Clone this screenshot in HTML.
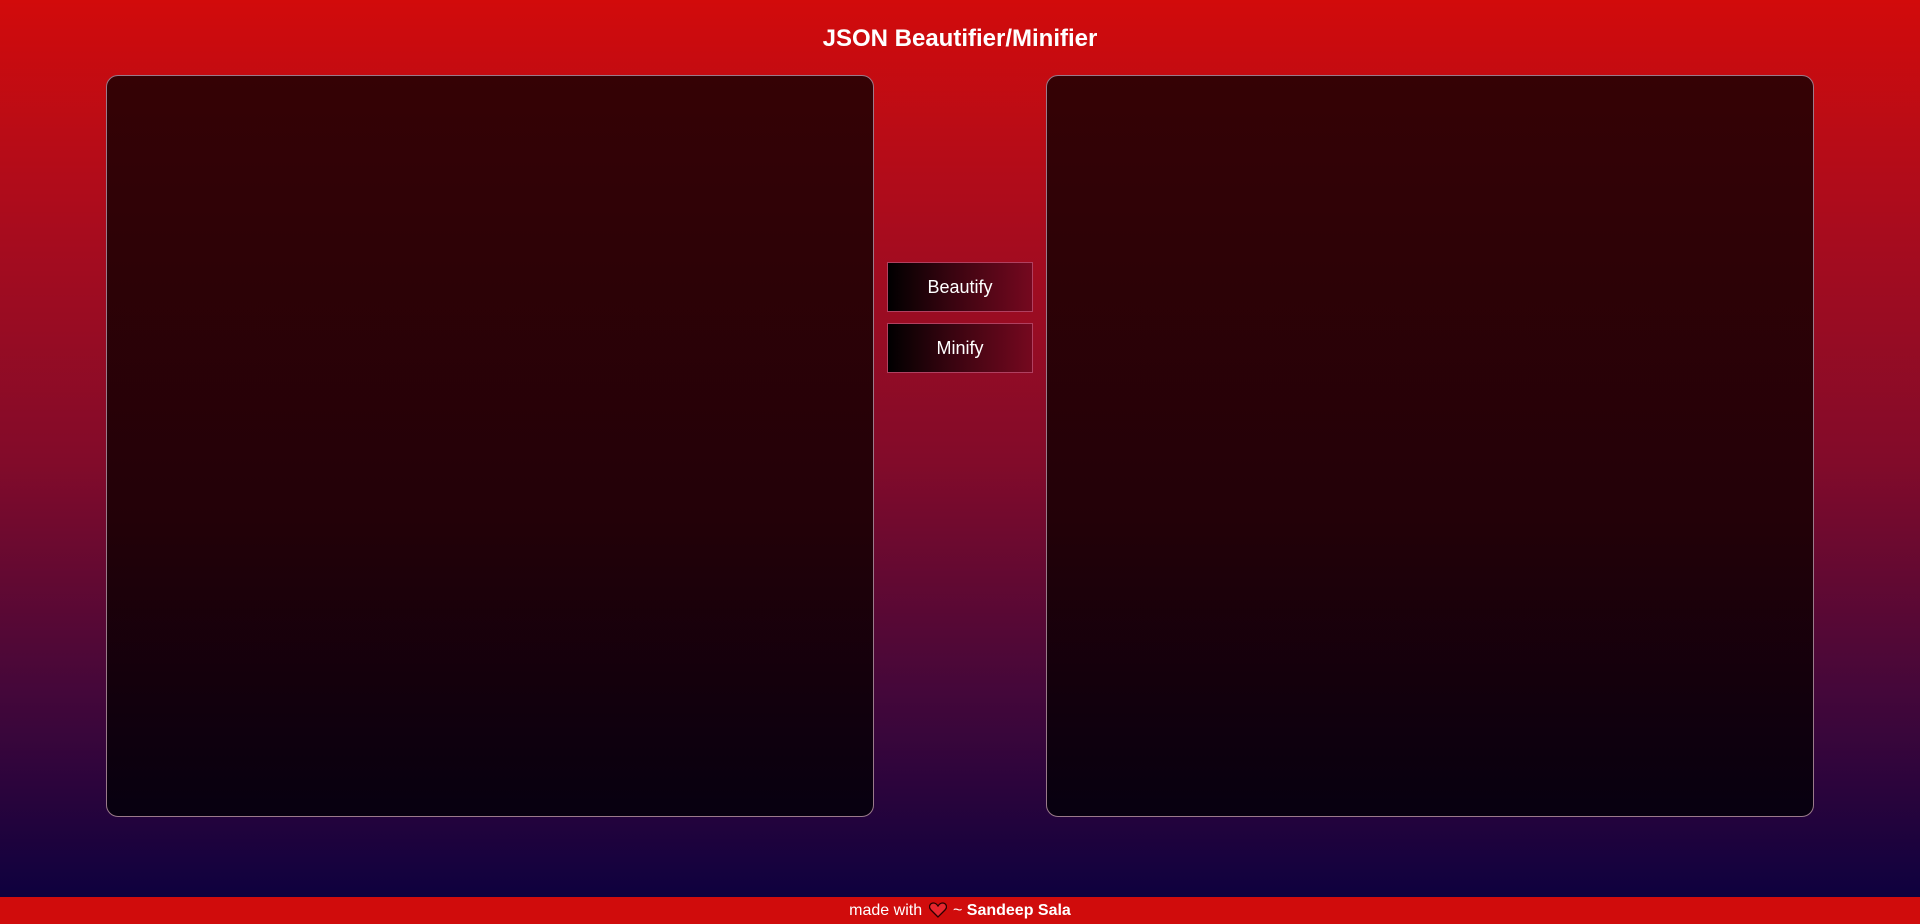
<!DOCTYPE html>
<html><head><style>
html,body{margin:0;padding:0}
body{width:1920px;height:924px;position:relative;overflow:hidden;font-family:"Liberation Sans",sans-serif;
background:linear-gradient(to bottom,#d20b0b 0%,#a80c1e 25%,#820b2a 50%,#44073a 75%,#07003f 100%);}
h1{position:absolute;top:25px;left:0;width:1920px;margin:0;text-align:center;color:#fff;font-size:24px;font-weight:bold;}
.panel{position:absolute;top:75px;width:768px;height:742px;border:1px solid #9a7a8a;border-radius:12px;box-sizing:border-box;
background:linear-gradient(to bottom,#350205 0%,#230108 60%,#070010 100%);}
.btn{position:absolute;left:887px;width:146px;height:50px;box-sizing:border-box;border:1px solid #b04060;
background:linear-gradient(to right,#000 0%,#3a0410 45%,#75081f 100%);color:#fff;font-size:18px;text-align:center;line-height:48px;}
footer{position:absolute;top:897px;left:0;width:1920px;height:27px;background:#d00c0c;color:#fff;text-align:center;font-size:16px;line-height:27px;}
footer svg{vertical-align:-3px;margin:0 2px}
</style></head><body>
<h1>JSON Beautifier/Minifier</h1>
<div class="panel" style="left:106px"></div>
<div class="panel" style="left:1046px"></div>
<div class="btn" style="top:262px">Beautify</div>
<div class="btn" style="top:323px">Minify</div>
<footer>made with <svg width="18" height="16" viewBox="0 0 18 16"><path d="M9 15 L2 8 C-1 5 1 1 4.5 1 C6.5 1 8 2.5 9 4 C10 2.5 11.5 1 13.5 1 C17 1 19 5 16 8 Z" fill="#e8262e" stroke="#2a0000" stroke-width="1.3"/></svg> ~ <b>Sandeep Sala</b></footer>
</body></html>
